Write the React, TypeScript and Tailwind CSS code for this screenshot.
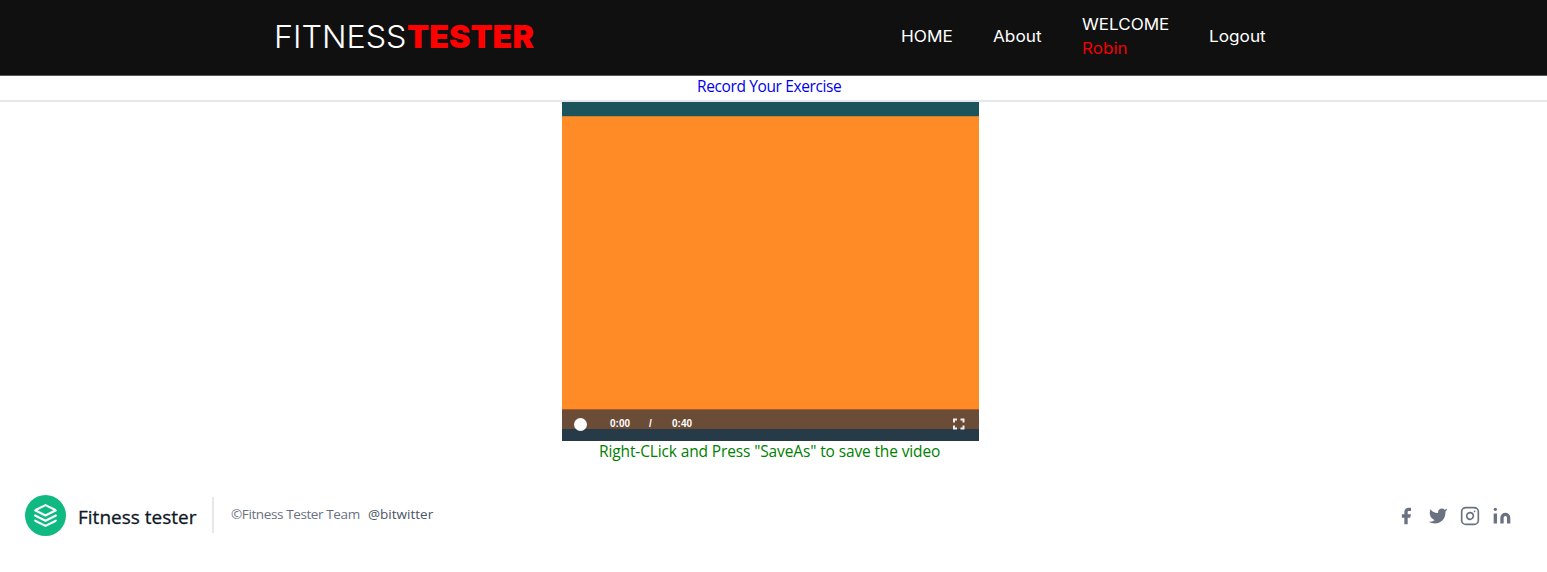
const navFont = "font-['Inter',sans-serif]";
const bodyFont = "font-['Open_Sans',sans-serif]";

function Header() {
  return (
    <header className={`flex h-[76px] justify-between border-b border-[#5c5658] bg-[#101010] pl-[274px] pr-[281px] text-white ${navFont}`}>
      <a className="flex h-[73px] items-center whitespace-nowrap text-[31.5px]">
        <span className="w-[133px] origin-left scale-x-[1.025] font-light">FITNESS</span>
        <span className="origin-left scale-x-[1.025] font-black text-[#ff0000]">TESTER</span>
      </a>
      <nav className="flex h-[73px] items-center whitespace-nowrap text-[15.5px] leading-6">
        <a className="w-[92px] origin-left scale-x-[1.11]">HOME</a>
        <a className="w-[89px] origin-left scale-x-[1.11]">About</a>
        <div className="w-[127px] origin-left scale-x-[1.1]">
          <div>WELCOME</div>
          <div className="text-[#f20000]">Robin</div>
        </div>
        <a className="w-[57px] origin-left scale-x-[1.11]">Logout</a>
      </nav>
    </header>
  );
}

function VideoPlayer() {
  return (
    <div className="ml-[562px] flex h-[339px] w-[417px] flex-col bg-[#ff8b26]">
      <div className="h-[15px] border-b border-[#c98335] bg-[#1b545b]" />
      <div className="grow" />
      <div className="flex h-[32px] items-center border-t border-[#a55b27] bg-[linear-gradient(#6b4c36_0_19px,#263b47_19px)] pl-[12px] pr-[14px] font-['Liberation_Sans',sans-serif] text-[10px] font-bold text-white">
        <span className="mb-[3px] mr-[23px] size-[13px] rounded-full bg-white" />
        <span className="mb-[5px] w-[39px]">0:00</span>
        <span className="mb-[5px] w-[23px]">/</span>
        <span className="mb-[5px]">0:40</span>
        <svg className="mb-[3px] ml-auto" width="13" height="12" viewBox="0 0 13 12" fill="none" stroke="#f3eeea" strokeWidth="2">
          <path d="M2 4.500V1.500h3M8.500 1.500h3v3M11.500 7.500v3h-3M5 10.500H2v-3" />
        </svg>
      </div>
    </div>
  );
}

function Footer() {
  return (
    <footer className={`mt-[30px] flex h-[42px] items-center pl-[25px] pr-[35px] ${bodyFont}`}>
      <svg xmlns="http://www.w3.org/2000/svg" fill="none" stroke="currentColor" strokeLinecap="round" strokeLinejoin="round" strokeWidth="2" className="size-[41px] rounded-full bg-[#10b981] p-2 text-white" viewBox="0 0 24 24">
        <path d="M12 2L2 7l10 5 10-5-10-5zM2 17l10 5 10-5M2 12l10 5 10-5" />
      </svg>
      <span className="ml-3 mt-[4px] w-[134px] whitespace-nowrap text-[19px] font-medium text-gray-900 [-webkit-text-stroke:0.3px]">Fitness tester</span>
      <p className="flex h-[36px] items-center whitespace-nowrap border-l-2 border-gray-200 pb-[2px] pl-[17px] text-[13.5px] text-gray-500">
        <span className="w-[137px] tracking-[-0.39px]">©Fitness Tester Team</span>
        <a className="text-gray-600">@bitwitter</a>
      </p>
      <div className="ml-auto flex gap-3 pt-px text-gray-500">
        <svg fill="currentColor" className="size-5" viewBox="0 0 24 24">
          <path d="M18 2h-3a5 5 0 00-5 5v3H7v4h3v8h4v-8h3l1-4h-4V7a1 1 0 011-1h3z" />
        </svg>
        <svg fill="currentColor" className="size-5" viewBox="0 0 24 24">
          <path d="M23 3a10.900 10.900 0 01-3.140 1.530 4.480 4.480 0 00-7.860 3v1A10.660 10.660 0 013 4s-4 9 5 13a11.640 11.640 0 01-7 2c9 5 20 0 20-11.500a4.500 4.500 0 00-.080-.830A7.720 7.720 0 0023 3z" />
        </svg>
        <svg fill="none" stroke="currentColor" strokeLinecap="round" strokeLinejoin="round" strokeWidth="2" className="size-5" viewBox="0 0 24 24">
          <rect width="20" height="20" x="2" y="2" rx="5" ry="5" />
          <path d="M16 11.370A4 4 0 1112.630 8 4 4 0 0116 11.370zm1.500-4.870h.01" />
        </svg>
        <svg fill="currentColor" className="size-5" viewBox="0 0 24 24">
          <path d="M16 8a6 6 0 016 6v7h-4v-7a2 2 0 00-2-2 2 2 0 00-2 2v7h-4v-7a6 6 0 016-6zM2 9h4v12H2z" />
          <circle cx="4" cy="4" r="2" />
        </svg>
      </div>
    </footer>
  );
}

export default function App() {
  return (
    <div className="flex min-h-[572px] flex-col bg-white">
      <Header />
      <h1 className={`h-[26px] whitespace-nowrap border-b-2 border-gray-200 pl-[697px] text-[15.5px] leading-[21px] tracking-[-0.38px] text-[#0000ee] ${bodyFont}`}>Record Your Exercise</h1>
      <VideoPlayer />
      <p className={`h-[23px] whitespace-nowrap pl-[599px] text-[15.5px] leading-[21px] tracking-[-0.13px] text-[#008000] ${bodyFont}`}>Right-CLick and Press "SaveAs" to save the video</p>
      <Footer />
    </div>
  );
}
